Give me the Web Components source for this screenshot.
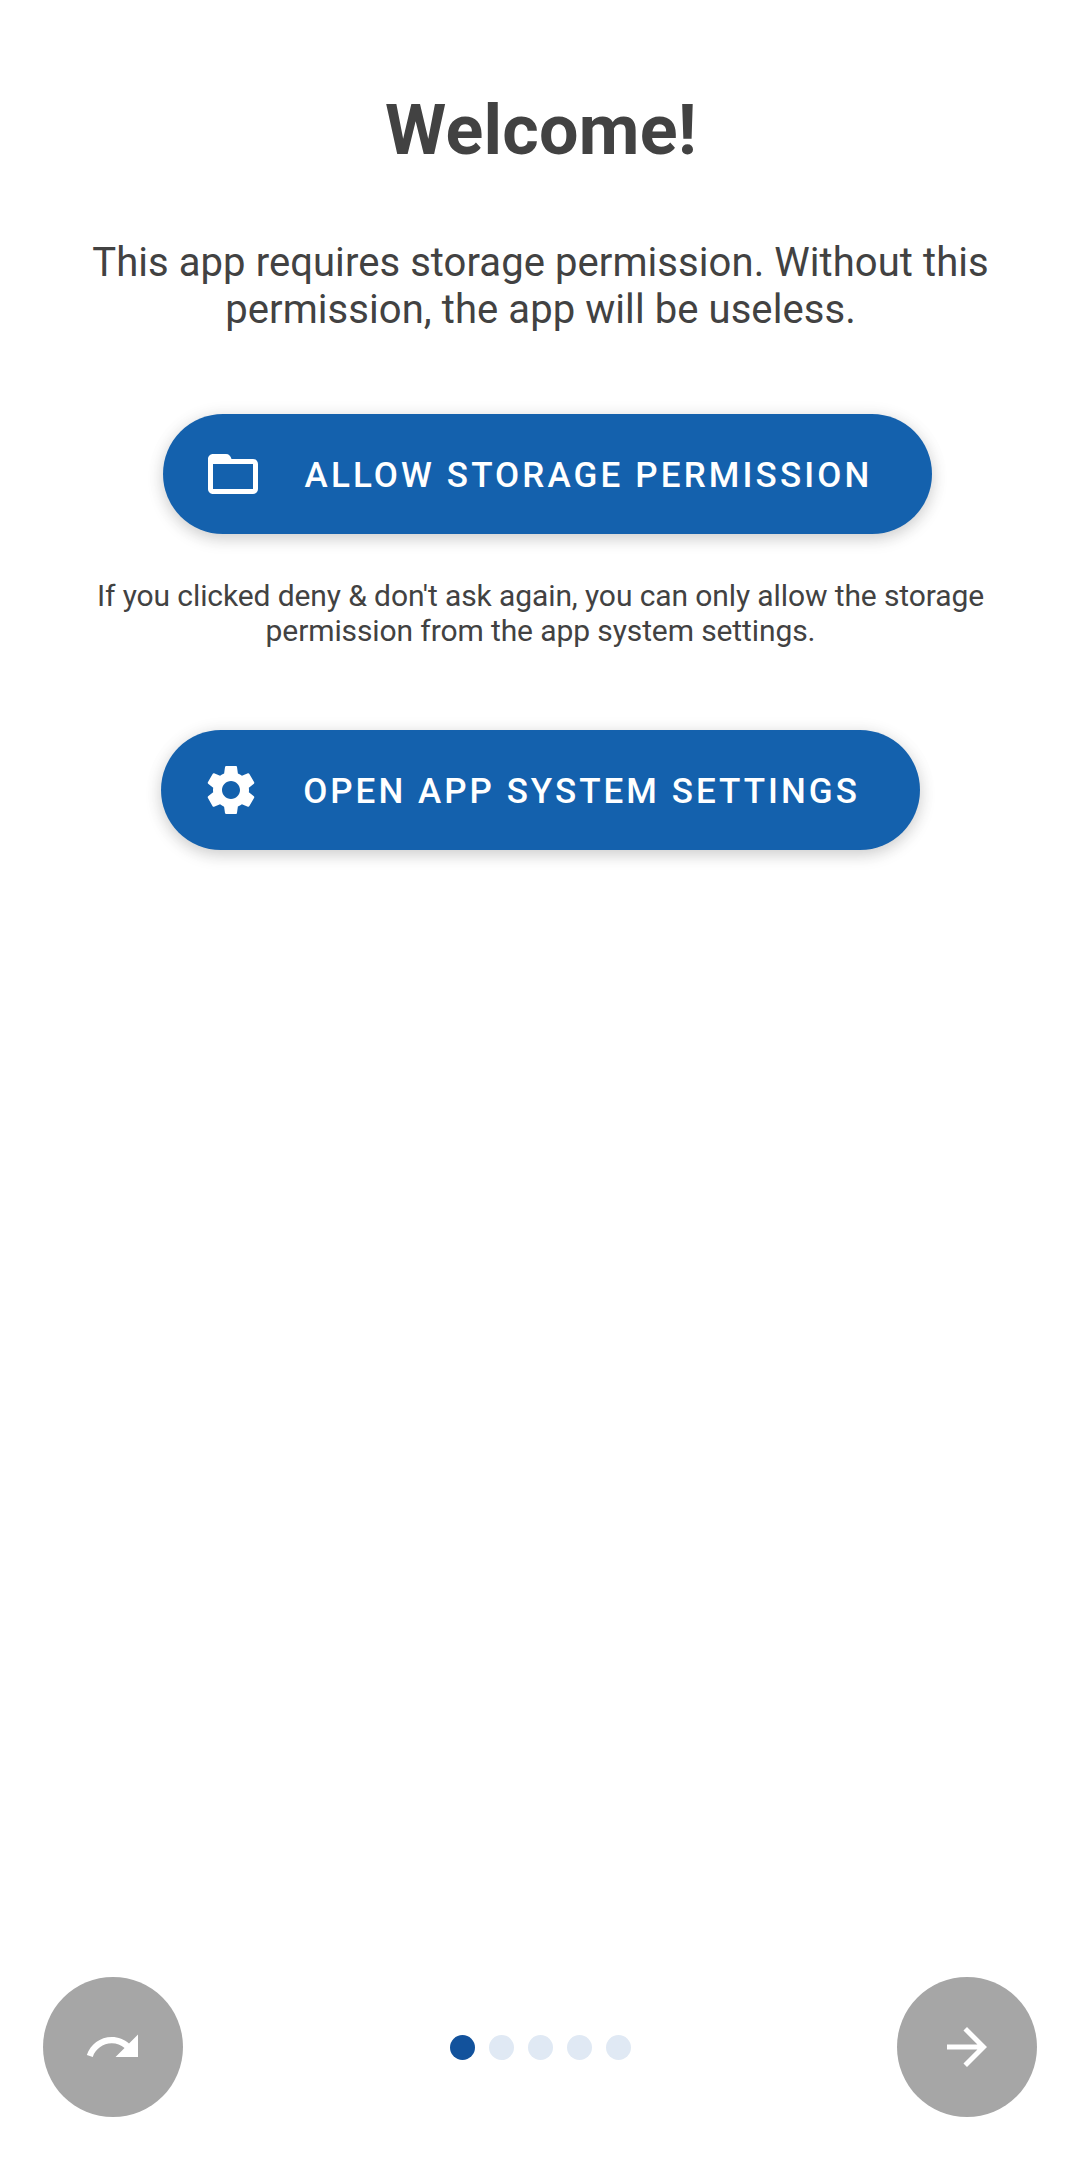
<!DOCTYPE html>
<html lang="en">
<head>
<meta charset="utf-8">
<title>Welcome</title>
<style>
html,body{margin:0;background:#fff}
body{font-family:Roboto,sans-serif;color:#424242}
</style>
</head>
<body>
<welcome-page>
  <welcome-title>Welcome!</welcome-title>
  <intro-text variant="body">This app requires storage permission. Without this<br>permission, the app will be useless.</intro-text>
  <pill-button id="allow">
    <svg slot="icon" viewBox="0 0 24 24" fill="#fff"><path d="M20 6h-8.600c-.3-1.200-1-2-2.200-2H4c-1.100 0-2 .9-2 2v12c0 1.100.9 2 2 2h16c1.100 0 2-.9 2-2V8c0-1.100-.9-2-2-2zm0 12H4V8h16v10z"/></svg>ALLOW STORAGE PERMISSION</pill-button>
  <intro-text variant="note">If you clicked deny &amp; don't ask again, you can only allow the storage<br>permission from the app system settings.</intro-text>
  <pill-button id="settings">
    <svg slot="icon" viewBox="0 0 24 24" fill="#fff"><path d="M19.140 12.940c.04-.3.06-.61.06-.94 0-.32-.02-.64-.07-.94l2.030-1.580c.18-.14.23-.41.12-.61l-1.920-3.320c-.12-.22-.37-.29-.59-.22l-2.390.96c-.5-.38-1.030-.7-1.620-.94l-.36-2.540c-.04-.24-.24-.41-.48-.41h-3.840c-.24 0-.43.17-.47.41l-.36 2.540c-.59.24-1.130.57-1.620.94l-2.390-.96c-.22-.08-.47 0-.59.22L2.740 8.870c-.12.21-.08.47.12.61l2.030 1.580c-.05.3-.09.63-.09.94s.02.64.07.94l-2.030 1.580c-.18.14-.23.41-.12.61l1.920 3.320c.12.22.37.29.59.22l2.390-.96c.5.38 1.030.7 1.620.94l.36 2.540c.05.24.24.41.48.41h3.840c.24 0 .44-.17.47-.41l.36-2.540c.59-.24 1.130-.56 1.620-.94l2.390.96c.22.08.47 0 .59-.22l1.920-3.320c.12-.22.07-.47-.12-.61l-2.010-1.580zM12 15.600c-1.980 0-3.600-1.620-3.600-3.600s1.620-3.600 3.600-3.600 3.600 1.620 3.600 3.600-1.620 3.600-3.600 3.600z"/></svg>OPEN APP SYSTEM SETTINGS</pill-button>
  <nav-bar slot="footer">
    <round-button><svg viewBox="0 0 24 24" fill="#fff"><path d="M18.400 10.600C16.550 8.990 14.150 8 11.500 8c-4.650 0-8.580 3.030-9.960 7.220L3.900 16c1.050-3.190 4.050-5.500 7.600-5.500 1.950 0 3.730.72 5.120 1.880L13 16h9V7l-3.600 3.600z"/></svg></round-button>
    <page-dots count="5" active="0"></page-dots>
    <round-button><svg viewBox="0 0 24 24" fill="#fff"><path d="M12 4l-1.410 1.410L16.170 11H4v2h12.170l-5.580 5.590L12 20l8-8z"/></svg></round-button>
  </nav-bar>
</welcome-page>
<script>
const define = (name, html, setup) => customElements.define(name, class extends HTMLElement {
  constructor() {
    super();
    this.attachShadow({ mode: 'open' }).innerHTML = html;
    if (setup) setup(this);
  }
});

define('welcome-page', `<style>
:host{display:flex;flex-direction:column;box-sizing:border-box;width:1080px;height:2160px;padding:89px 0 43px;overflow:hidden;background:#fff}
main{flex:1;display:flex;flex-direction:column;align-items:center}
::slotted(welcome-title){margin-bottom:68px}
::slotted(#allow){margin:81px 0 44px 15px}
::slotted(#settings){margin:82px 0 0 1px;--tracking:3.02px}
</style><main><slot></slot></main><slot name="footer"></slot>`);

define('welcome-title', `<style>
:host{display:block;padding-left:2px;font-size:70px;line-height:82px;font-weight:700;letter-spacing:.25px;text-align:center;white-space:nowrap}
</style><slot></slot>`);

define('intro-text', `<style>
:host{display:block;padding-left:1px;text-align:center;white-space:nowrap;font-size:40px;line-height:47px;letter-spacing:.07px}
:host([variant=note]){font-size:30px;line-height:35px;letter-spacing:-.105px}
</style><slot></slot>`);

define('pill-button', `<style>
:host{display:flex;align-items:center;box-sizing:border-box;height:120px;padding:0 60px 0 40px;gap:42px;border-radius:60px;background:#1461ad;color:#fff;
font-size:35px;line-height:41px;font-weight:500;letter-spacing:var(--tracking,3.125px);white-space:nowrap;box-shadow:0 5px 16px rgba(0,0,0,.17),0 1px 20px rgba(0,0,0,.05)}
::slotted(svg){display:block;width:60px;height:60px}
span{padding-top:2px}
</style><slot name="icon"></slot><span><slot></slot></span>`);

define('nav-bar', `<style>
:host{display:flex;align-items:center;justify-content:space-between;padding:0 43px}
</style><slot></slot>`);

define('round-button', `<style>
:host{display:flex;align-items:center;justify-content:center;width:140px;height:140px;border-radius:50%;background:#a6a6a6}
::slotted(svg){display:block;width:60px;height:60px}
</style><slot></slot>`);

define('page-dots', `<style>
:host{display:flex;gap:14px}
i{width:25px;height:25px;border-radius:50%;background:#e0e9f4}
i.on{background:#12529c}
</style>`, el => {
  const active = +el.getAttribute('active');
  for (let n = 0; n < +el.getAttribute('count'); n++) {
    const dot = document.createElement('i');
    if (n === active) dot.className = 'on';
    el.shadowRoot.append(dot);
  }
});
</script>
</body>
</html>
